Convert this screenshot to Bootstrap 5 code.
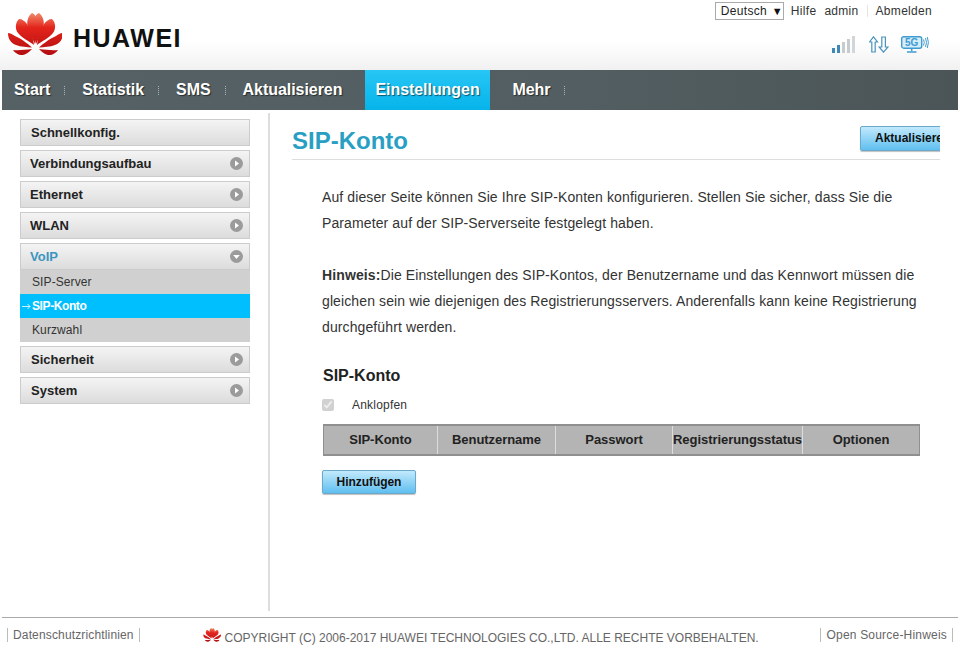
<!DOCTYPE html>
<html lang="de">
<head>
    <meta charset="UTF-8">
    <meta name="viewport" content="width=device-width, initial-scale=1.0">
    <title>SIP-Konto</title>
    <link href="https://cdn.jsdelivr.net/npm/bootstrap@5.3.0/dist/css/bootstrap.min.css" rel="stylesheet">
    <style>
        html, body {
            height: 653px;
            overflow: hidden;
        }
        body {
            font-family: "Liberation Sans", Arial, sans-serif;
            font-size: 14px;
            color: #333;
            background: #fff;
        }
        .top-head {
            height: 70px;
            background: linear-gradient(#fff 0, #fff 60%, #f1f1f1 100%);
            padding-left: 8px;
            padding-right: 28px;
        }
        .brand-word {
            font-size: 25px;
            font-weight: 700;
            color: #111;
            margin-left: 11px;
            margin-top: 23px;
            letter-spacing: 1.500px;
            line-height: 30px;
        }
        .logo-big {
            margin-top: 13px;
        }
        .top-links {
            font-size: 12px;
            letter-spacing: .3px;
            color: #333;
            padding-top: 2px;
            height: 20px;
            white-space: nowrap;
        }
        .lang-box {
            width: 69px;
            height: 18px;
            border: 1px solid #aaa;
            padding-left: 5px;
            margin-right: 7px;
            line-height: 16px;
            color: #222;
        }
        .lang-box span {
            font-size: 11px;
            margin-left: 1px;
            color: #111;
        }
        .link-admin {
            margin-left: 8px;
        }
        .link-logout {
            margin-left: 8px;
            padding-left: 8px;
            height: 12px;
            margin-top: 3px;
            line-height: 12px;
            border-left: 1px solid #e4e4e4;
        }
        .status-icons {
            margin-top: 16px;
            margin-right: 3px;
        }
        .icon-bars {
            margin-right: 13px;
        }
        .icon-arrows {
            margin-right: 12px;
        }
        .main-nav {
            height: 40px;
            margin: 0 2px;
            background: linear-gradient(90deg, #566165 0, #525e61 60%, #4b5557 100%);
            padding-left: 10px;
            flex-wrap: nowrap;
        }
        .main-nav .nav-link {
            color: #fff;
            font-size: 16px;
            font-weight: 700;
            padding: 0 2px;
            line-height: 40px;
            letter-spacing: -.05px;
            text-shadow: 1px 1px 1px rgba(0, 0, 0, .55);
        }
        .nav-gap {
            width: 1px;
            height: 9px;
            margin: 16px 15px 0 12px;
            border-left: 1px dotted #aab2b4;
        }
        .main-nav .nav-link.nav-current {
            width: 125px;
            padding: 0 10px;
            margin: 0 20px 0 21px;
            color: #fff;
            background: linear-gradient(#27c6f5, #06b4ea);
        }
        .page-body {
            height: 507px;
        }
        .side-col {
            width: 268px;
            padding: 9px 18px 0 20px;
            flex-shrink: 0;
        }
        .side-rule {
            width: 2px;
            margin-top: 3px;
            height: 498px;
            background: #ddd;
            flex-shrink: 0;
        }
        .side-item {
            height: 27px;
            margin-bottom: 4px;
            padding: 0 6px 0 9px;
            border: 1px solid #ccc;
            background: linear-gradient(#f4f4f4, #dcdcdc);
            color: #222;
            font-size: 13px;
            font-weight: 700;
            line-height: 25px;
        }
        .side-item.side-flush {
            padding-left: 10px;
        }
        .side-item.side-open {
            margin-bottom: 0;
            color: #3d95bf;
        }
        .side-sub {
            background: #d0d0d0;
            margin-bottom: 4px;
        }
        .side-sub a {
            display: block;
            height: 24px;
            line-height: 24px;
            padding-left: 12px;
            font-size: 12px;
            letter-spacing: .1px;
            color: #333;
            text-decoration: none;
            position: relative;
        }
        .side-sub a.side-active {
            background: #00bfff;
            color: #fff;
            font-weight: 700;
            letter-spacing: -.4px;
        }
        .side-arrow {
            position: absolute;
            left: 2px;
            top: 9px;
        }
        .content-col {
            width: 670px;
            padding-left: 22px;
            overflow: hidden;
        }
        .title-bar {
            height: 50px;
            border-bottom: 1px solid #ddd;
            padding-top: 17px;
            width: 648px;
            overflow: hidden;
        }
        .page-title {
            font-size: 24px;
            font-weight: 700;
            color: #2a9fc4;
            margin: 0;
            line-height: 28px;
        }
        .blue-btn {
            height: 25px;
            padding: 0;
            border: 1px solid #6aa9c9;
            border-radius: 2px;
            background: linear-gradient(#c2e9fc, #5fbff0);
            color: #111;
            font-size: 12px;
            font-weight: 700;
            line-height: 23px;
            box-shadow: 0 1px 1px rgba(0, 0, 0, .25);
        }
        .btn-refresh {
            width: 90px;
            margin-top: -1px;
            margin-right: -10px;
            flex-shrink: 0;
            padding-left: 14px;
            text-align: left;
            white-space: nowrap;
        }
        .btn-add {
            width: 94px;
            height: 24px;
            line-height: 21px;
            display: block;
            text-align: center;
            letter-spacing: -.05px;
        }
        .text-area {
            padding: 24px 0 0 30px;
            width: 628px;
            font-size: 14px;
            line-height: 26px;
            color: #333;
            letter-spacing: .11px;
        }
        .text-area p {
            margin: 0 0 26px;
        }
        .sub-title {
            font-size: 16px;
            font-weight: 700;
            color: #222;
            margin: 0;
            line-height: 20px;
            padding-left: 1px;
            letter-spacing: 0;
        }
        .check-row {
            margin-top: 9px;
            height: 20px;
            font-size: 12px;
            line-height: 20px;
            letter-spacing: .2px;
        }
        .check-row input {
            width: 12px;
            height: 12px;
            margin: 0 18px 0 0;
        }
        .sip-table {
            width: 596px;
            margin: 9px 0 14px 1px;
            table-layout: fixed;
            border-collapse: collapse;
            letter-spacing: -.05px;
        }
        .sip-table th {
            height: 30px;
            padding: 0;
            background: #b4b4b4;
            border-top: 2px solid #8f8f8f;
            border-bottom: 2px solid #8f8f8f;
            border-left: 1px solid #ddd;
            font-size: 13px;
            font-weight: 700;
            color: #222;
            text-align: center;
            white-space: nowrap;
        }
        .sip-table th:first-child {
            border-left: 1px solid #8f8f8f;
        }
        .sip-table th:last-child {
            border-right: 1px solid #8f8f8f;
        }
        .foot-bar {
            height: 36px;
            margin: 0 2px;
            border-top: 1px solid #aaa;
            font-size: 12px;
            color: #666;
        }
        .foot-link {
            margin-top: 10px;
            padding: 0 5px;
            height: 14px;
            line-height: 14px;
            border-left: 1px solid #bbb;
            border-right: 1px solid #bbb;
            white-space: nowrap;
            letter-spacing: .2px;
        }
        .foot-left {
            margin-left: 5px;
            letter-spacing: .15px;
        }
        .foot-right {
            margin-right: 5px;
        }
        .foot-copy {
            margin: 10px 0 0 1px;
            white-space: nowrap;
            line-height: 16px;
        }
        .foot-copy span {
            margin-top: 2px;
        }
    </style>
</head>
<body>
    <svg width="0" height="0" class="d-block">
        <defs>
            <linearGradient id="petalRed" gradientUnits="userSpaceOnUse" x1="0" y1="13" x2="0" y2="55">
                <stop offset="0" stop-color="#f08a6c"/>
                <stop offset=".35" stop-color="#e3241b"/>
                <stop offset="1" stop-color="#b30d11"/>
            </linearGradient>
            <symbol id="petals" viewBox="8 13 54 43">
                <g id="halfFan" fill="url(#petalRed)">
                    <path d="M32 13C28 16 26 22 28 28C30 34 33 40 35 44C36.500 36 38 28 37.500 22C37 18 35 14 32 13Z"/>
                    <path d="M19 19C15 23 15 29 18 33C22 38 29 41 34 45C33 37 30 28 27 24C25 21 22 19 19 19Z"/>
                    <path d="M8 33C8 39 11 43 16 45C21 47 27 47 32 47.500C27 43 20 38 15 36C12 34 10 33 8 33Z"/>
                    <path d="M13 50C18 50.500 25 50 32 49C29 52 26 54.500 23 55C19 55.500 15 53 13 50Z"/>
                </g>
                <use href="#halfFan" transform="translate(71 0) scale(-1 1)"/>
            </symbol>
            <symbol id="dotRight" viewBox="0 0 13 13">
                <circle cx="6.500" cy="6.500" r="6.500" fill="#9b9b9b"/>
                <path d="M5 3.500L9 6.500L5 9.500Z" fill="#fff"/>
            </symbol>
            <symbol id="dotDown" viewBox="0 0 13 13">
                <circle cx="6.500" cy="6.500" r="6.500" fill="#9b9b9b"/>
                <path d="M3.200 5H9.800L6.500 9Z" fill="#fff"/>
            </symbol>
        </defs>
    </svg>

    <header class="top-head d-flex justify-content-between">
        <div class="d-flex align-items-start">
            <svg class="logo-big" width="54" height="43"><use href="#petals"/></svg>
            <div class="brand-word">HUAWEI</div>
        </div>
        <div class="d-flex flex-column align-items-end">
            <div class="top-links d-flex">
                <div class="lang-box">Deutsch <span>▼</span></div>
                <span>Hilfe</span>
                <span class="link-admin">admin</span>
                <span class="link-logout">Abmelden</span>
            </div>
            <div class="status-icons d-flex align-items-start">
                <svg width="24" height="17" viewBox="0 0 24 17" class="icon-bars">
                    <rect x="0" y="12" width="3" height="5" fill="#3f87b5"/>
                    <rect x="5" y="9" width="3" height="8" fill="#3f87b5"/>
                    <rect x="10" y="6" width="3" height="11" fill="#c5cbce"/>
                    <rect x="15" y="3" width="3" height="14" fill="#c5cbce"/>
                    <rect x="20" y="0" width="3" height="17" fill="#d3d6d8"/>
                </svg>
                <svg width="20" height="17" viewBox="0 0 20 17" fill="none" stroke="#4a93bb" stroke-width="1.200" class="icon-arrows">
                    <path d="M4.500.8L8.500 6H6.200V16H2.800V6H.5Z"/>
                    <path d="M14.500 16.200L19 11H16.400V1H12.800V11H10.200Z"/>
                </svg>
                <svg width="28" height="17" viewBox="0 0 28 17" fill="none" stroke="#3f9bd0">
                    <rect x=".7" y=".7" width="20" height="11.500" rx="2" stroke-width="1.400" fill="#d5edf9"/>
                    <text x="10.700" y="10" font-family="Liberation Sans" font-size="10" font-weight="700" fill="#3f9bd0" stroke="none" text-anchor="middle">5G</text>
                    <path d="M10.700 12.500V15M6 16H15.500" stroke-width="1.500"/>
                    <path d="M22.500 3.500Q24 6.500 22.500 9.500M24.500 2Q26.500 6.500 24.500 11M26.300 1Q28.500 6.500 26.300 12" stroke-width="1"/>
                </svg>
            </div>
        </div>
    </header>

    <ul class="nav main-nav">
        <li class="nav-item"><a class="nav-link" href="#">Start</a></li>
        <li class="nav-gap"></li>
        <li class="nav-item"><a class="nav-link" href="#">Statistik</a></li>
        <li class="nav-gap"></li>
        <li class="nav-item"><a class="nav-link" href="#">SMS</a></li>
        <li class="nav-gap"></li>
        <li class="nav-item"><a class="nav-link" href="#">Aktualisieren</a></li>
        <li class="nav-item"><a class="nav-link nav-current" href="#">Einstellungen</a></li>
        <li class="nav-item"><a class="nav-link" href="#">Mehr</a></li>
        <li class="nav-gap"></li>
    </ul>

    <div class="page-body d-flex">
        <aside class="side-col">
            <div class="side-item side-flush">Schnellkonfig.</div>
            <div class="side-item d-flex justify-content-between align-items-center">Verbindungsaufbau <svg width="13" height="13"><use href="#dotRight"/></svg></div>
            <div class="side-item d-flex justify-content-between align-items-center">Ethernet <svg width="13" height="13"><use href="#dotRight"/></svg></div>
            <div class="side-item d-flex justify-content-between align-items-center">WLAN <svg width="13" height="13"><use href="#dotRight"/></svg></div>
            <div class="side-item side-open d-flex justify-content-between align-items-center">VoIP <svg width="13" height="13"><use href="#dotDown"/></svg></div>
            <div class="side-sub">
                <a href="#">SIP-Server</a>
                <a href="#" class="side-active"><svg class="side-arrow" width="9" height="7" viewBox="0 0 9 7" fill="none" stroke="#fff" stroke-width=".8"><path d="M0 3.500H8M5.500 1L8 3.500L5.500 6"/></svg>SIP-Konto</a>
                <a href="#">Kurzwahl</a>
            </div>
            <div class="side-item side-flush d-flex justify-content-between align-items-center">Sicherheit <svg width="13" height="13"><use href="#dotRight"/></svg></div>
            <div class="side-item side-flush d-flex justify-content-between align-items-center">System <svg width="13" height="13"><use href="#dotRight"/></svg></div>
        </aside>
        <div class="side-rule"></div>
        <main class="content-col">
            <div class="title-bar d-flex justify-content-between">
                <h1 class="page-title">SIP-Konto</h1>
                <button class="blue-btn btn-refresh" type="button">Aktualisieren</button>
            </div>
            <div class="text-area">
                <p>Auf dieser Seite können Sie Ihre SIP-Konten konfigurieren. Stellen Sie sicher, dass Sie die Parameter auf der SIP-Serverseite festgelegt haben.</p>
                <p><strong>Hinweis:</strong>Die Einstellungen des SIP-Kontos, der Benutzername und das Kennwort müssen die gleichen sein wie diejenigen des Registrierungsservers. Anderenfalls kann keine Registrierung durchgeführt werden.</p>
                <h2 class="sub-title">SIP-Konto</h2>
                <div class="check-row d-flex align-items-center">
                    <input type="checkbox" checked disabled>
                    <span>Anklopfen</span>
                </div>
                <table class="sip-table">
                    <colgroup>
                        <col style="width: 114px">
                        <col style="width: 118px">
                        <col style="width: 117px">
                        <col style="width: 130px">
                        <col style="width: 117px">
                    </colgroup>
                    <tr>
                        <th>SIP-Konto</th>
                        <th>Benutzername</th>
                        <th>Passwort</th>
                        <th>Registrierungsstatus</th>
                        <th>Optionen</th>
                    </tr>
                </table>
                <button class="blue-btn btn-add" type="button">Hinzufügen</button>
            </div>
        </main>
    </div>

    <footer class="foot-bar d-flex justify-content-between">
        <div class="foot-link foot-left">Datenschutzrichtlinien</div>
        <div class="foot-copy d-flex align-items-start">
            <svg width="18" height="14" class="me-1"><use href="#petals"/></svg>
            <span>COPYRIGHT (C) 2006-2017 HUAWEI TECHNOLOGIES CO.,LTD. ALLE RECHTE VORBEHALTEN.</span>
        </div>
        <div class="foot-link foot-right">Open Source-Hinweis</div>
    </footer>
    <script src="https://cdn.jsdelivr.net/npm/bootstrap@5.3.0/dist/js/bootstrap.bundle.min.js"></script>
</body>
</html>
